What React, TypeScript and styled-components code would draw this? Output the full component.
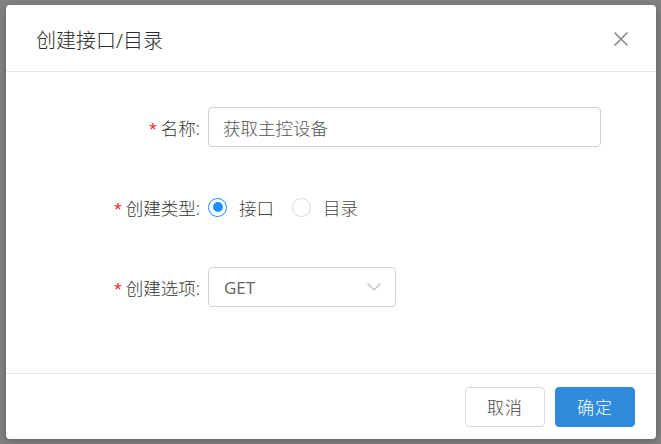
import React, { useState } from "react";
import styled, { createGlobalStyle } from "styled-components";

const GlobalStyle = createGlobalStyle`
  html, body {
    margin: 0;
    padding: 0;
    background: #828282;
  }
  body {
    font-family: "Noto Sans", "Noto Sans CJK SC", sans-serif;
  }
`;

const Backdrop = styled.div`
  width: 661px;
  height: 444px;
  padding: 5px 5px 5px 6px;
  box-sizing: border-box;
  background: #828282;
`;

const Modal = styled.div`
  width: 650px;
  height: 434px;
  background: #fff;
  border-radius: 4px;
  box-shadow: 0 2px 8px rgba(0, 0, 0, 0.25);
  display: flex;
  flex-direction: column;
  overflow: hidden;
`;

const Header = styled.div`
  height: 67px;
  box-sizing: border-box;
  padding: 0 27px 0 30px;
  border-bottom: 1px solid #e8e8e8;
  display: flex;
  align-items: center;
  justify-content: space-between;
`;

const Title = styled.div`
  font-size: 20px;
  font-weight: 300;
  color: #2a2a2a;
  padding-top: 2px;
`;

const CloseButton = styled.button`
  border: none;
  background: none;
  padding: 0;
  width: 16px;
  height: 16px;
  cursor: pointer;
  display: flex;
  margin-top: 2px;
`;

const Body = styled.div`
  flex: 1;
  padding-top: 35px;
  display: flex;
  flex-direction: column;
  gap: 40px;
`;

const Row = styled.div`
  display: flex;
  align-items: center;
  height: 40px;
`;

const Label = styled.label`
  width: 194px;
  margin-right: 8px;
  display: flex;
  justify-content: flex-end;
  align-items: center;
  font-size: 17.5px;
  font-weight: 300;
  color: #333;
`;

const Star = styled.span`
  color: #f5222d;
  font-family: "Liberation Sans", sans-serif;
  font-size: 19px;
  font-weight: 400;
  line-height: 1;
  margin-right: 4px;
  margin-top: 5px;
`;

const TextInput = styled.input`
  width: 393px;
  height: 40px;
  box-sizing: border-box;
  border: 1px solid #d0d0d0;
  border-radius: 4px;
  padding: 0 14px;
  font-family: "Noto Sans", "Noto Sans CJK SC", sans-serif;
  font-size: 17.5px;
  font-weight: 300;
  color: #555;
  outline: none;
`;

const RadioGroup = styled.div`
  display: flex;
  align-items: center;
  gap: 18px;
`;

const RadioOption = styled.label`
  display: flex;
  align-items: center;
  gap: 12px;
  font-size: 17.5px;
  font-weight: 300;
  color: #444;
  cursor: pointer;
`;

const RadioDot = styled.span<{ $checked: boolean }>`
  width: 19px;
  height: 19px;
  box-sizing: border-box;
  border-radius: 50%;
  border: 1px solid ${(p) => (p.$checked ? "#1890ff" : "#d9d9d9")};
  display: flex;
  align-items: center;
  justify-content: center;

  &::after {
    content: "";
    width: 10px;
    height: 10px;
    border-radius: 50%;
    background: #1890ff;
    display: ${(p) => (p.$checked ? "block" : "none")};
  }
`;

const Select = styled.div`
  width: 188px;
  height: 40px;
  box-sizing: border-box;
  border: 1px solid #d4d4d4;
  border-radius: 4px;
  padding: 0 14px 0 15px;
  display: flex;
  align-items: center;
  justify-content: space-between;
  font-size: 17px;
  color: #666;
  font-family: "Open Sans", "Noto Sans", sans-serif;
`;

const Footer = styled.div`
  height: 66px;
  box-sizing: border-box;
  border-top: 1px solid #e8e8e8;
  padding: 0 21px;
  display: flex;
  align-items: center;
  justify-content: flex-end;
  gap: 10px;
`;

const Button = styled.button<{ $primary?: boolean }>`
  width: 80px;
  height: 40px;
  border-radius: 4px;
  font-family: "Noto Sans", "Noto Sans CJK SC", sans-serif;
  font-size: 17px;
  font-weight: 300;
  letter-spacing: 1px;
  cursor: pointer;
  border: 1px solid ${(p) => (p.$primary ? "#2f8bdb" : "#d9d9d9")};
  background: ${(p) => (p.$primary ? "#2f8bdb" : "#fff")};
  color: ${(p) => (p.$primary ? "#fff" : "#444")};
`;

const App: React.FC = () => {
  const [name, setName] = useState<string>("获取主控设备");
  const [type, setType] = useState<string>("api");

  return (
    <Backdrop>
      <GlobalStyle />
      <Modal>
        <Header>
          <Title>创建接口/目录</Title>
          <CloseButton aria-label="关闭">
            <svg width="16" height="16" viewBox="0 0 16 16">
              <path d="M1.5 1.5 L14.5 14.5 M14.5 1.5 L1.5 14.5" stroke="#888" strokeWidth="1.6" fill="none" />
            </svg>
          </CloseButton>
        </Header>
        <Body>
          <Row>
            <Label>
              <Star>*</Star>名称:
            </Label>
            <TextInput value={name} onChange={(e) => setName(e.target.value)} />
          </Row>
          <Row>
            <Label>
              <Star>*</Star>创建类型:
            </Label>
            <RadioGroup>
              <RadioOption onClick={() => setType("api")}>
                <RadioDot $checked={type === "api"} />
                接口
              </RadioOption>
              <RadioOption onClick={() => setType("dir")}>
                <RadioDot $checked={type === "dir"} />
                目录
              </RadioOption>
            </RadioGroup>
          </Row>
          <Row>
            <Label>
              <Star>*</Star>创建选项:
            </Label>
            <Select>
              GET
              <svg width="14" height="8" viewBox="0 0 14 8">
                <path d="M0.5 0.5 L7 7 L13.5 0.5" stroke="#bbb" strokeWidth="1.2" fill="none" />
              </svg>
            </Select>
          </Row>
        </Body>
        <Footer>
          <Button>取消</Button>
          <Button $primary>确定</Button>
        </Footer>
      </Modal>
    </Backdrop>
  );
};

export default App;
